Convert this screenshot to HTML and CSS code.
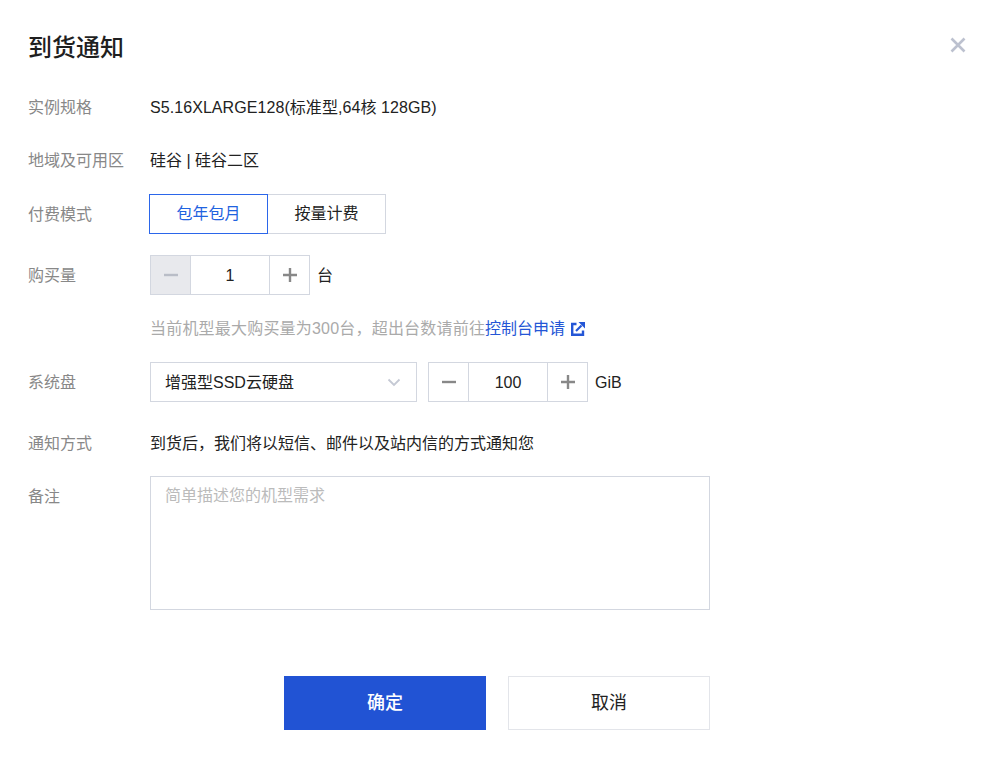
FILE: index.html
```html
<!DOCTYPE html>
<html lang="zh-CN">
<head>
    <meta charset="UTF-8">
    <meta name="viewport" content="width=device-width, initial-scale=1.0">
    <title>到货通知</title>
    <link rel="stylesheet" href="styles.css">
</head>
<body>
    <div class="dialog">
        <div class="dialog-head">
            <h2>到货通知</h2>
            <button class="close-btn" aria-label="关闭">
                <svg width="16" height="16" viewBox="0 0 16 16"><path d="M1.5 1.5L14.5 14.5M14.5 1.5L1.5 14.5" stroke="#bcc1cf" stroke-width="2.6" fill="none"/></svg>
            </button>
        </div>

        <div class="form-row row-spec">
            <label>实例规格</label>
            <div class="value spec-text">S5.16XLARGE128(标准型,64核 128GB)</div>
        </div>
        <div class="form-row row-region">
            <label>地域及可用区</label>
            <div class="value">硅谷 | 硅谷二区</div>
        </div>
        <div class="form-row row-pay">
            <label>付费模式</label>
            <div class="tabs">
                <div class="tab active">包年包月</div>
                <div class="tab">按量计费</div>
            </div>
        </div>
        <div class="form-row row-count">
            <label>购买量</label>
            <div class="stepper">
                <span class="step disabled"><svg width="14" height="14" viewBox="0 0 14 14"><path d="M0 7H14" stroke="#b9bdc7" stroke-width="2.4"/></svg></span>
                <span class="step-num">1</span>
                <span class="step"><svg width="14" height="14" viewBox="0 0 14 14"><path d="M0 7H14M7 0V14" stroke="#888" stroke-width="2.4"/></svg></span>
            </div>
            <span class="unit">台</span>
        </div>
        <div class="form-row row-hint">
            <label></label>
            <div class="hint"><span class="hint-text">当前机型最大购买量为300台，超出台数请前往</span><a href="#">控制台申请</a>
                <svg class="ext" width="14" height="14" viewBox="0 0 14 14"><path d="M5.5 2H1.2V12.8H12V8.5" stroke="#2456d6" stroke-width="2.4" fill="none"/><path d="M7.5 0H14V6.5Z" fill="#2456d6"/><path d="M10.5 3.5L5 9" stroke="#2456d6" stroke-width="2.2" fill="none"/></svg>
            </div>
        </div>
        <div class="form-row row-disk">
            <label>系统盘</label>
            <div class="select">
                <span>增强型SSD云硬盘</span>
                <svg width="14" height="9" viewBox="0 0 14 9"><path d="M1.5 1.5L7 7L12.5 1.5" stroke="#c5c9d4" stroke-width="1.8" fill="none"/></svg>
            </div>
            <div class="stepper">
                <span class="step"><svg width="14" height="14" viewBox="0 0 14 14"><path d="M0 7H14" stroke="#888" stroke-width="2.4"/></svg></span>
                <span class="step-num">100</span>
                <span class="step"><svg width="14" height="14" viewBox="0 0 14 14"><path d="M0 7H14M7 0V14" stroke="#888" stroke-width="2.4"/></svg></span>
            </div>
            <span class="unit">GiB</span>
        </div>
        <div class="form-row row-notify">
            <label>通知方式</label>
            <div class="value">到货后，我们将以短信、邮件以及站内信的方式通知您</div>
        </div>
        <div class="form-row row-note">
            <label>备注</label>
            <textarea placeholder="简单描述您的机型需求"></textarea>
        </div>

        <div class="dialog-foot">
            <button class="btn btn-primary">确定</button>
            <button class="btn">取消</button>
        </div>
    </div>
</body>
</html>
```

FILE: styles.css
```css
* {
    box-sizing: border-box;
    margin: 0;
    padding: 0;
}

body {
    background: white;
    color: #222;
    font-family: "Liberation Sans", "Noto Sans CJK SC", sans-serif;
    font-size: 16px;
    line-height: 20px;
}

.dialog {
    width: 998px;
    height: 760px;
    padding: 0 28px;
}

.dialog-head {
    display: flex;
    justify-content: space-between;
    align-items: center;
    height: 92px;
}

.dialog-head h2 {
    margin-top: 4px;
    font-size: 24px;
    font-weight: 500;
    color: #1f1f1f;
}

.close-btn {
    display: flex;
    border: none;
    background: none;
    margin-right: 4px;
    margin-bottom: 2px;
}

.form-row {
    display: flex;
    align-items: center;
}

.form-row label {
    flex: none;
    width: 122px;
    padding-top: 2px;
    color: #888;
}

.value {
    padding-top: 2px;
}

.spec-text {
    letter-spacing: 0.07px;
}

.row-spec {
    height: 30px;
}

.row-region {
    height: 30px;
    margin-top: 23px;
}

.row-pay {
    margin-top: 19px;
}

.row-count {
    margin-top: 21px;
}

.row-hint {
    margin-top: 24px;
}

.row-disk {
    margin-top: 23px;
}

.row-notify {
    margin-top: 30px;
}

.row-note {
    align-items: flex-start;
    margin-top: 22px;
}

.form-row.row-note label {
    padding-top: 11px;
}

.tabs {
    display: flex;
    margin-left: -1px;
}

.tab {
    width: 118px;
    height: 40px;
    line-height: 38px;
    text-align: center;
    border: 1px solid #d3d7e0;
    border-left: none;
}

.tab.active {
    width: 119px;
    color: #1f63e0;
    border: 1px solid #2b66ea;
}

.stepper {
    display: flex;
    height: 40px;
    border: 1px solid #d3d7e0;
}

.step {
    display: flex;
    justify-content: center;
    align-items: center;
    width: 39px;
}

.step.disabled {
    background: #e8e9ed;
}

.step-num {
    width: 80px;
    line-height: 40px;
    text-align: center;
    border-left: 1px solid #d3d7e0;
    border-right: 1px solid #d3d7e0;
}

.unit {
    margin-left: 7px;
    padding-top: 2px;
}

.hint {
    display: flex;
    align-items: center;
    color: #aaa;
}

.hint-text {
    letter-spacing: 0.2px;
}

.hint a {
    color: #2456d6;
    text-decoration: none;
}

.ext {
    margin-left: 6px;
}

.select {
    display: flex;
    justify-content: space-between;
    align-items: center;
    width: 267px;
    height: 40px;
    padding: 0 15px 0 14px;
    margin-right: 11px;
    border: 1px solid #d3d7e0;
}

.select span {
    padding-top: 2px;
}

textarea {
    width: 560px;
    height: 134px;
    padding: 9px 14px;
    border: 1px solid #d3d7e0;
    outline: none;
    resize: none;
    font: inherit;
}

textarea::placeholder {
    color: #bbb;
}

.dialog-foot {
    display: flex;
    gap: 22px;
    margin-top: 66px;
    margin-left: 256px;
}

.btn {
    width: 202px;
    height: 54px;
    border: 1px solid #e3e5ea;
    background: white;
    color: #222;
    font: inherit;
    font-size: 18px;
}

.btn-primary {
    background: #2153d4;
    border-color: #2153d4;
    color: white;
    font-weight: 500;
}
```
